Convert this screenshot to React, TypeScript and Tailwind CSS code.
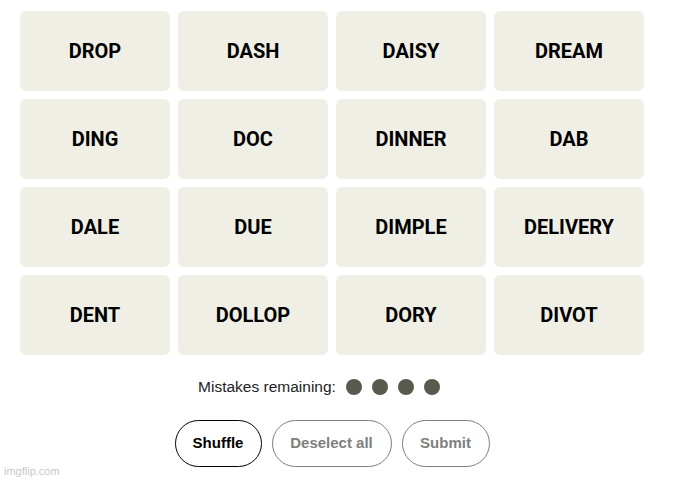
import React from "react";

const words = [
  "DROP", "DASH", "DAISY", "DREAM",
  "DING", "DOC", "DINNER", "DAB",
  "DALE", "DUE", "DIMPLE", "DELIVERY",
  "DENT", "DOLLOP", "DORY", "DIVOT",
];

export default function App() {
  return (
    <div className="relative w-[676px] h-[479px] bg-white overflow-hidden" style={{ fontFamily: "'Liberation Sans', Arial, sans-serif" }}>
      <div className="pl-[20px] pt-[11px] w-[664px]">
        <div className="grid grid-cols-[repeat(4,150px)] gap-[8px] w-[624px]">
          {words.map((w) => (
            <div
              key={w}
              className="h-[80px] rounded-[6px] bg-[#efefe6] flex items-center justify-center text-[20px] font-bold text-black"
              style={{ fontFamily: "Roboto, sans-serif" }}
            >
              {w}
            </div>
          ))}
        </div>
        <div className="w-[624px] flex items-center justify-center mt-[22px] h-[20px] pr-[26px]">
          <span className="text-[15.5px] text-[#222]">Mistakes remaining:</span>
          <div className="flex gap-[10px] ml-[10px]">
            <span className="w-[16px] h-[16px] rounded-full bg-[#5a594e]" />
            <span className="w-[16px] h-[16px] rounded-full bg-[#5a594e]" />
            <span className="w-[16px] h-[16px] rounded-full bg-[#5a594e]" />
            <span className="w-[16px] h-[16px] rounded-full bg-[#5a594e]" />
          </div>
        </div>
        <div className="w-[624px] flex justify-center gap-[10px] mt-[23px]">
          <button className="h-[47px] w-[87px] rounded-full border border-black text-[15px] font-bold text-black">Shuffle</button>
          <button className="h-[47px] w-[120px] rounded-full border border-[#7f7f7f] text-[15px] font-bold text-[#7f7f7f]">Deselect all</button>
          <button className="h-[47px] w-[88px] rounded-full border border-[#7f7f7f] text-[15px] font-bold text-[#7f7f7f]">Submit</button>
        </div>
      </div>
      <div className="absolute left-[4px] top-[463px] text-[11px] text-[#c8c8c8]">imgflip.com</div>
    </div>
  );
}
